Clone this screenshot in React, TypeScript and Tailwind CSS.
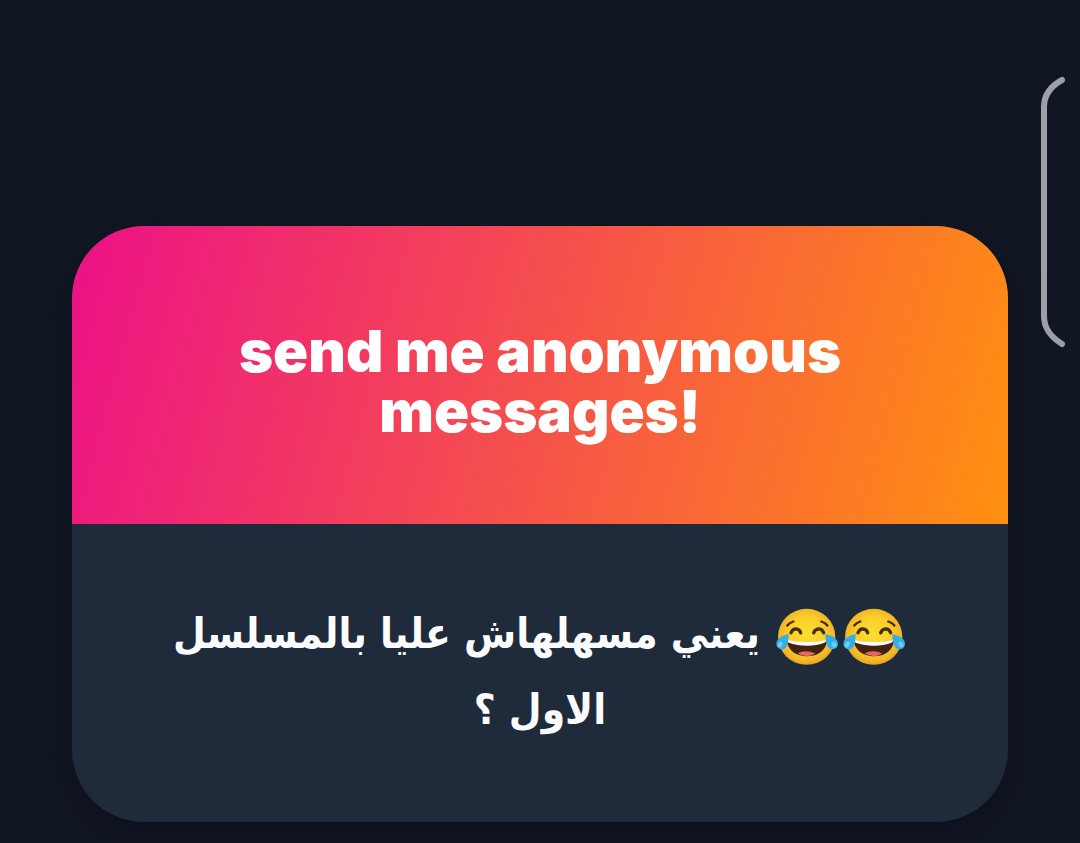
function JoyEmoji() {
  return (
    <svg
      viewBox="35 52 201 176"
      role="img"
      aria-label="face with tears of joy"
      className="inline-block h-[59px] w-[67px] align-middle"
    >
      <defs>
        <radialGradient id="face" cx="0.5" cy="0.46" r="0.56">
          <stop offset="0" stopColor="#fcdc30" />
          <stop offset="0.55" stopColor="#fad02c" />
          <stop offset="0.85" stopColor="#f2b528" />
          <stop offset="1" stopColor="#e19a24" />
        </radialGradient>
      </defs>
      <ellipse cx="136" cy="141" rx="86" ry="84" fill="url(#face)" />
      <g fill="none" stroke="#4a2b14" strokeLinecap="round">
        <path d="M78 107Q84 99 96 95" strokeWidth="7" />
        <path d="M180 95Q192 99 198 107" strokeWidth="7" />
        <path d="M89 129Q93 117 104 117Q115 118 118 129" strokeWidth="10" />
        <path d="M157 129Q161 118 172 117Q183 117 187 129" strokeWidth="10" />
      </g>
      <path
        d="M78 153Q136 164 194 153Q198 153 196 160C188 186 166 199 137 199C107 199 86 186 78 162Z"
        fill="#44220f"
      />
      <path d="M109 190Q134 178 162 191Q151 199 136 199Q120 198 109 190Z" fill="#e5685f" />
      <path d="M80 151Q136 162 192 151Q196 152 191 158Q166 168 137 168Q107 168 82 159Q76 153 80 151Z" fill="#fff" />
      <path d="M82 133C66 135 46 144 45 161C45 173 55 180 65 178C80 174 81 154 82 133Z" fill="#35aee8" />
      <path d="M192 133C208 135 229 144 230 161C230 173 220 180 210 178C195 174 193 154 192 133Z" fill="#35aee8" />
      <ellipse cx="57" cy="164" rx="7" ry="9" fill="#70caf3" transform="rotate(28 57 164)" />
      <ellipse cx="218" cy="164" rx="7" ry="9" fill="#70caf3" transform="rotate(-28 218 164)" />
    </svg>
  )
}

function EdgeHandle() {
  return (
    <svg
      viewBox="0 0 28 272"
      aria-hidden="true"
      className="absolute top-[76px] right-[13px] h-[272px] w-[28px]"
    >
      <path
        d="M23 4C12 10 5 18 5 31V240C5 253 12 261 23 268"
        fill="none"
        stroke="#9c9fa6"
        strokeWidth="6"
        strokeLinecap="round"
      />
    </svg>
  )
}

export default function App() {
  return (
    <main className="relative min-h-screen bg-[#111722] px-[72px] pt-[226px] pb-5">
      <EdgeHandle />
      <article className="overflow-hidden rounded-[72px] bg-[#1f2a3a] shadow-[0_12px_32px_rgba(12,12,28,0.6)]">
        <header className="bg-linear-[105deg,#ec1187,#ff9010] px-32 pt-[95px] pb-[83px] text-center">
          <h1 className="font-['Inter',sans-serif] text-[58px] leading-[60px] font-black text-white">
            send me anonymous messages!
          </h1>
        </header>
        <p
          dir="rtl"
          lang="ar"
          className="px-20 pt-[72px] pb-[74px] text-center font-['DejaVu_Sans_Condensed','DejaVu_Sans',sans-serif] text-[42px] leading-[76px] font-bold text-[#fafcff]"
        >
          <JoyEmoji />
          <JoyEmoji /> يعني مسهلهاش عليا بالمسلسل الاول ؟
        </p>
      </article>
    </main>
  )
}
